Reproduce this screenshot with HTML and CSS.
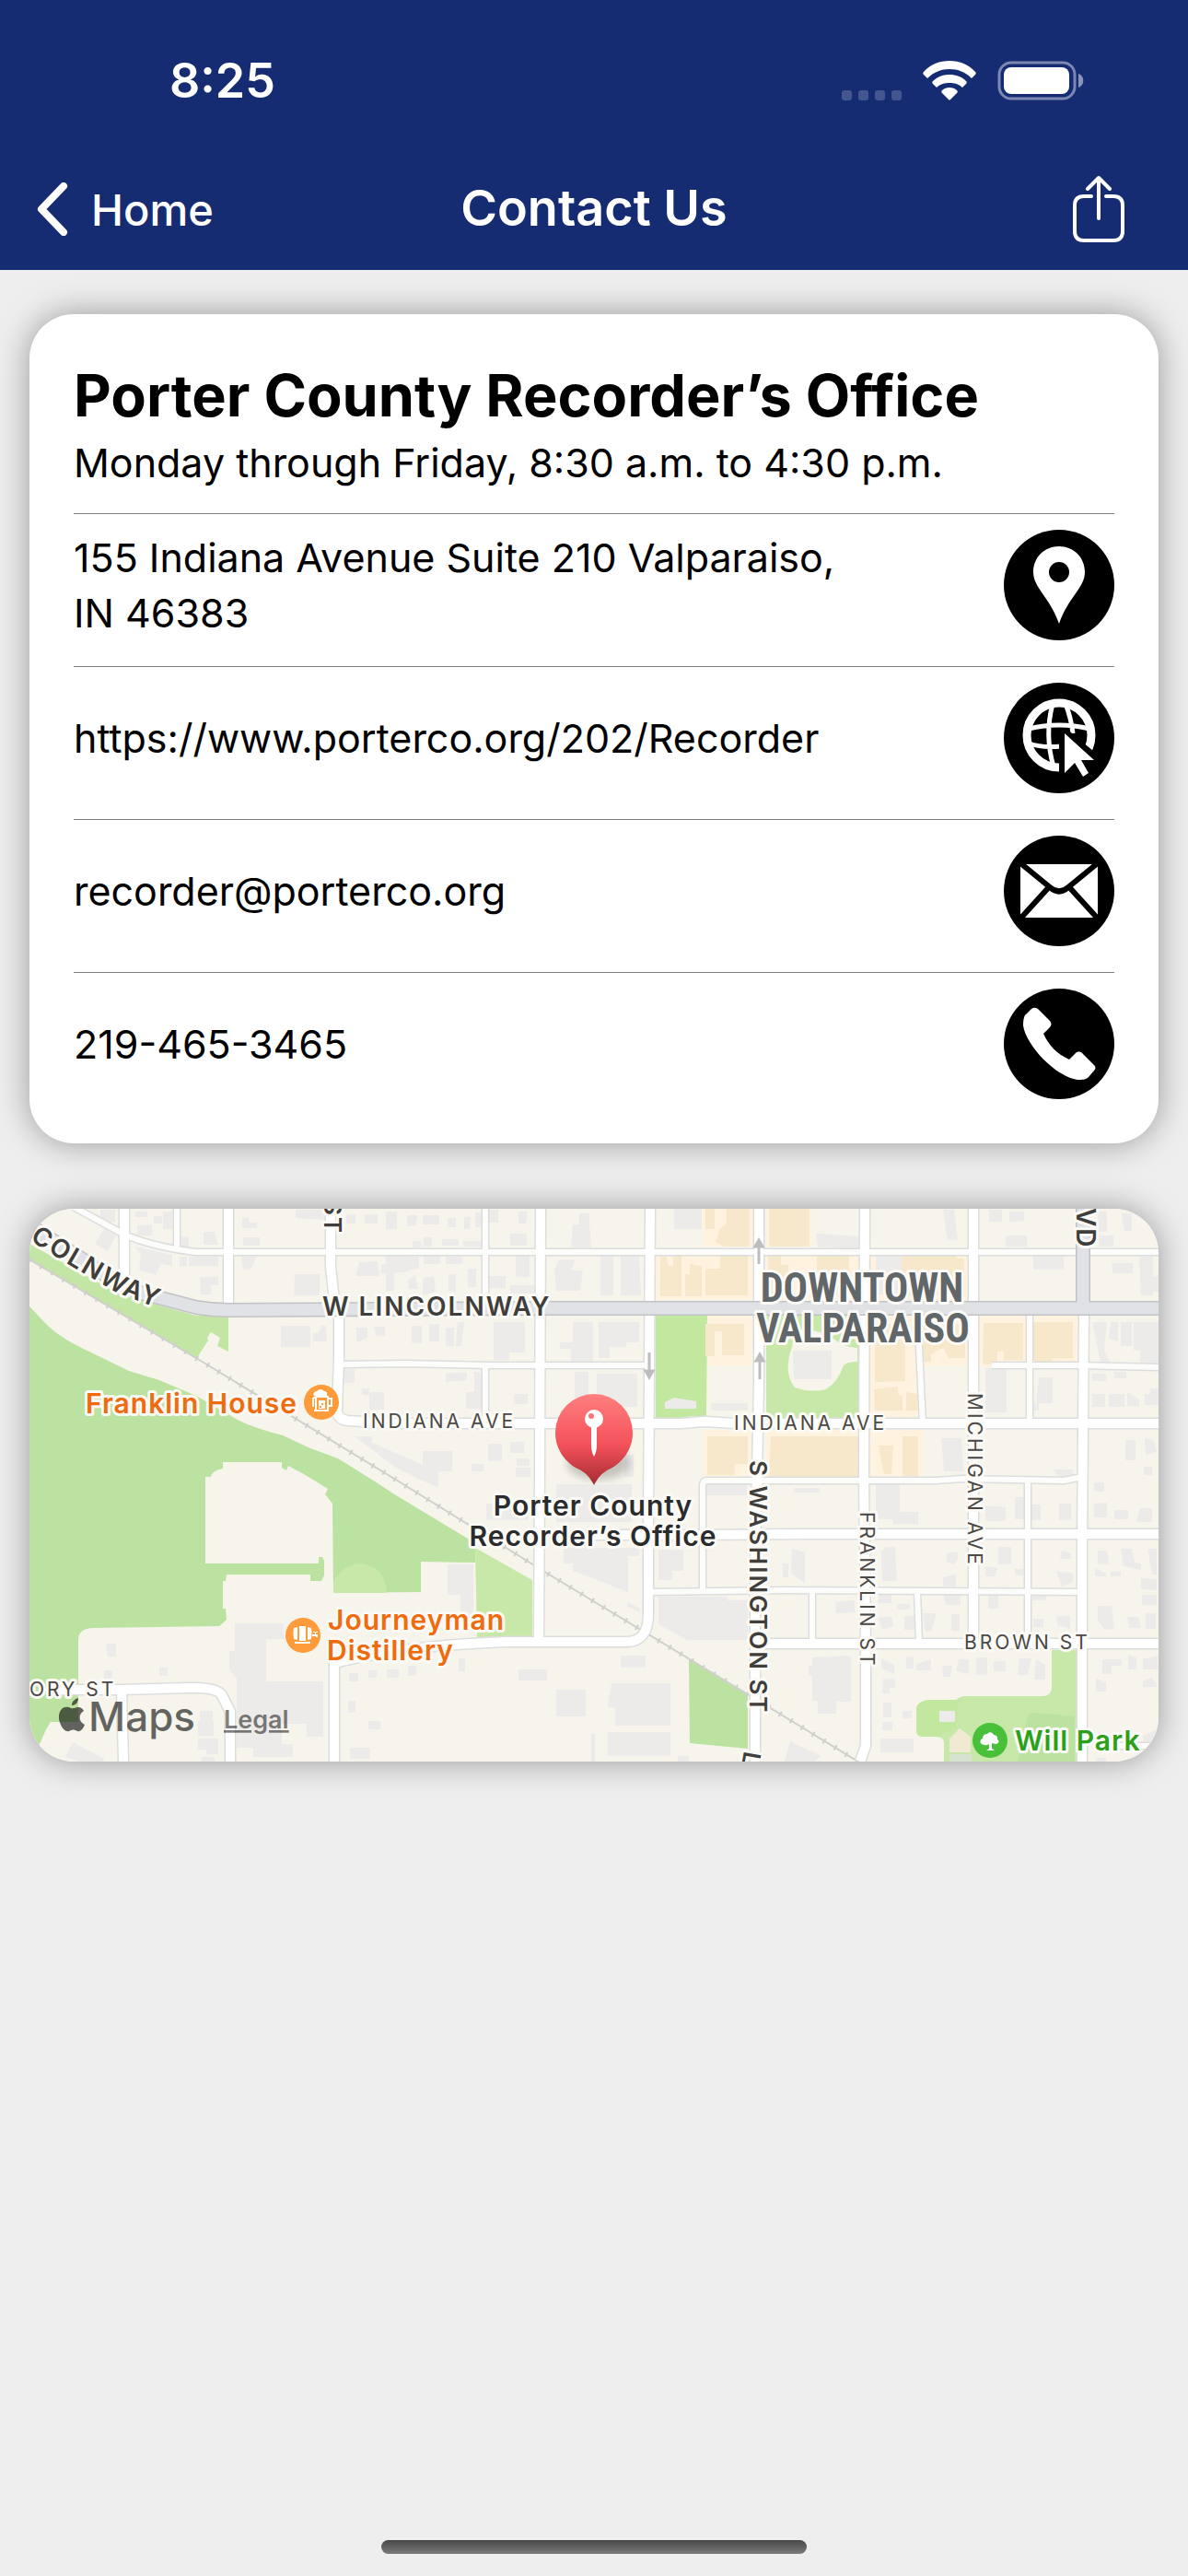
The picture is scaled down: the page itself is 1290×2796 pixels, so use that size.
FILE: index.html
```html
<!DOCTYPE html>
<html lang="en">
<head>
    <meta charset="UTF-8">
    <meta name="viewport" content="width=device-width, initial-scale=1.0">
    <title>Contact Us</title>
    <link rel="stylesheet" href="styles.css">
</head>
<body>
    <header class="header">
        <div class="status-bar">
            <span class="time">8:25</span>
            <div class="status-icons">
                <svg class="dots" width="65" height="11" viewBox="0 0 65 11">
                    <rect width="11" height="11" rx="3"/>
                    <rect x="18" width="11" height="11" rx="3"/>
                    <rect x="36" width="11" height="11" rx="3"/>
                    <rect x="54" width="11" height="11" rx="3"/>
                </svg>
                <svg class="wifi" width="58" height="43" viewBox="0 0 58 43">
                    <path d="M29 0C18 0 8 4 1 12c-1 1-1 2 0 3l4 4C12 12 20 9 29 9s17 3 24 10l4-4c1-1 1-2 0-3C50 4 40 0 29 0z"/>
                    <path d="M29 15c-7 0-13 2-18 7-1 1-1 2 0 3l4 4c4-4 9-5 14-5s10 1 14 5l4-4c1-1 1-2 0-3-5-5-11-7-18-7z"/>
                    <path d="M29 29c-3 0-6 1-8 3-1 1-1 2 0 3l7 7c1 1 1 1 2 0l7-7c1-1 1-2 0-3-2-2-5-3-8-3z"/>
                </svg>
                <svg class="battery" width="94" height="43" viewBox="0 0 94 43">
                    <rect x="2" y="2" width="82" height="39" rx="13" fill="none" stroke="#7c88b1" stroke-width="3"/>
                    <rect x="7" y="7" width="71" height="29" rx="8" fill="#fff"/>
                    <path d="M88 14c7 2 7 13 0 15z" fill="#8b95ba"/>
                </svg>
            </div>
        </div>
        <nav class="nav-bar">
            <a class="back" href="#">
                <svg width="34" height="58" viewBox="0 0 34 58"><path d="M29 4L5 29l24 25"/></svg>
                Home
            </a>
            <h1 class="title">Contact Us</h1>
            <button class="share" type="button" aria-label="Share">
                <svg width="58" height="74" viewBox="0 0 58 74"><path d="M21 23h-8q-10 0-10 10v28q0 10 10 10h32q10 0 10-10V33q0-10-10-10h-8M29 47V3M17 15L29 3l12 12"/></svg>
            </button>
        </nav>
    </header>

    <main class="content">
        <section class="card">
            <h2>Porter County Recorder’s Office</h2>
            <p class="hours">Monday through Friday, 8:30 a.m. to 4:30 p.m.</p>
            <a class="row" href="#map">
                <span>155 Indiana Avenue Suite 210 Valparaiso, IN 46383</span>
                <svg class="icon" viewBox="0 0 120 120">
                    <circle cx="60" cy="60" r="60"/>
                    <path fill="#fff" d="M60 18C44 18 32 30 32 46c0 17 18 27 28 56 10-29 28-39 28-56 0-16-12-28-28-28z"/>
                    <circle cx="60" cy="46" r="11"/>
                </svg>
            </a>
            <a class="row" href="https://www.porterco.org/202/Recorder">
                <span>https://www.porterco.org/202/Recorder</span>
                <svg class="icon" viewBox="0 0 120 120">
                    <circle cx="60" cy="60" r="60"/>
                    <g fill="none" stroke="#fff" stroke-width="5">
                        <circle cx="60" cy="57" r="35" stroke-width="9"/>
                        <path d="M53 23Q44 57 54 91M67 23Q73 38 75 55M27 50Q60 42 93 50M27 66Q42 71 62 69"/>
                    </g>
                    <path d="M60 50h8L97 74l10 8-17 22-30 8z"/>
                    <path fill="#fff" d="M66 55v43l11-11 9 15 6-4-8-14h14z"/>
                </svg>
            </a>
            <a class="row" href="mailto:recorder@porterco.org">
                <span>recorder@porterco.org</span>
                <svg class="icon" viewBox="0 0 120 120">
                    <circle cx="60" cy="60" r="60"/>
                    <path fill="#fff" d="M18 31h84v58H18z"/>
                    <path fill="none" stroke="#000" stroke-width="6" d="M17 29l33 27q10 9 20 0l33-27M48 57L18 90M72 57l30 33"/>
                </svg>
            </a>
            <a class="row" href="tel:219-465-3465">
                <span>219-465-3465</span>
                <svg class="icon" viewBox="0 0 120 120">
                    <circle cx="60" cy="60" r="60"/>
                    <path fill="#fff" d="M29 23c3-3 6-3 9 0l12 12c2 2 2 5 0 7l-7 7c6 13 15 22 28 28l7-7c2-2 5-2 7 0l13 13c2 2 2 4 0 6l-6 7c-3 3-7 3-12 3-23-3-56-37-59-59 0-6 1-11 3-12z"/>
                </svg>
            </a>
        </section>

        <section class="map" id="map">
            <svg viewBox="32 1312 1226 600">
                <defs>
                    <linearGradient id="pinRed" x1="0" y1="0" x2="0" y2="1">
                        <stop offset="0" stop-color="#ff7f7f"/>
                        <stop offset=".55" stop-color="#f4525a"/>
                        <stop offset="1" stop-color="#a52a32"/>
                    </linearGradient>
                    <filter id="soft"><feGaussianBlur stdDeviation="5"/></filter>
                    <path id="lincolnCurve" d="M32 1346L77 1374L123 1401Q150 1413 190 1426"/>

                    <!-- street network, drawn once for the edge and once for the surface -->
                    <g id="alleys">
                        <path d="M80 1310L135 1340Q165 1353 212 1359H850L1258 1359M192 1312V1356"/>
                        <path d="M370 1481L440 1480L530 1482H705M1077 1482H1170L1258 1484"/>
                        <path d="M527 1312V1418M527 1482V1545M763 1727V1612Q763 1607 768 1607H1015L1045 1605L1155 1607L1175 1603"/>
                        <path d="M705 1728L850 1726L1175 1728M882 1727V1784M996 1727L998 1784M996 1422L1002 1545"/>
                        <path d="M1118 1420V1545M1116 1607V1784M1200 1895H1258"/>
                    </g>
                    <g id="streets">
                        <path d="M135 1312V1405M248 1312V1418M359 1312V1375L363 1412L368 1430V1475L366 1530Q366 1541 378 1542L430 1545H740L765 1543L800 1545H1258"/>
                        <path d="M587 1312L586 1600L585 1782M706 1312L704 1660V1752Q704 1782 680 1782H550Q440 1786 363 1805V1912"/>
                        <path d="M824 1312V1500L820 1700V1912M939 1312L938 1600L940 1790V1895L934 1912"/>
                        <path d="M1057 1312V1784M1177 1425L1175 1680V1912"/>
                        <path d="M647 1666H760L870 1665H1258M822 1784H1258M60 1834H132L205 1832Q236 1831 241 1840L250 1858V1912M132 1834L134 1912"/>
                    </g>
                    <path id="highway" d="M32 1330L63 1350L87 1365Q125 1394 152 1403L213 1419Q230 1422 248 1422L600 1420H1258M1176 1312V1420"/>
                </defs>

                <path class="land" d="M32 1312h1226v600H32z"/>

                <!-- parks and lawns -->
                <path fill="#c3e6a4" d="M32 1350L130 1405L213 1428H248V1467L236 1461L239 1452L229 1446L225 1452L226 1455L213 1475L32 1366z"/>
                <path fill="#bce2a1" d="M32 1418L50 1437Q66 1453 97 1467L140 1488L173 1498L213 1515L253 1538Q266 1547 307 1558L337 1572L367 1583L407 1608L430 1623L516 1675V1696L457 1695V1728L362 1729L361 1632L353 1622L356 1616L330 1600L313 1591L311 1596L306 1593V1587H242V1594Q230 1596 229 1603H223V1697H346V1690H350L352 1694V1710L349 1716H337V1709H246L245 1716H242V1746H245L246 1758L238 1765L100 1767Q85 1768 85 1780V1869H55L50 1877L43 1893L32 1912z"/>
                <path fill="#c8e8aa" d="M516 1680L578 1715V1776L518 1777zM362 1716Q375 1697 392 1697Q418 1700 420 1729H362z"/>
                <path fill="#bce2a1" d="M748 1801L812 1840V1898L749 1892z"/>
                <path fill="#c1e89e" d="M712 1428H768L767 1537H750L740 1539H712z"/>
                <path fill="#c8e8aa" d="M832 1428H932V1540H832z"/>
                <path class="land" d="M860 1462Q850 1490 863 1506Q880 1512 897 1508Q910 1500 916 1482Q920 1478 931 1478V1463Q915 1462 905 1453Q890 1443 870 1443Q862 1446 860 1462z"/>
                <path fill="#c8e8aa" d="M1142 1791H1170V1912H1025V1892Q1025 1885 1016 1885H1002Q995 1885 995 1878V1855Q996 1846 1010 1845H1038Q1043 1841 1048 1841H1134Q1141 1840 1142 1832z"/>
                <path fill="#c1e89e" d="M1040 1845H1010Q996 1846 995 1855V1878Q995 1885 1002 1885H1016L1038 1876z"/>
                <path fill="#bce2a1" d="M1122 1859L1167 1863V1912H1105L1115 1866Q1117 1860 1122 1859z"/>

                <!-- shopping blocks -->
                <path fill="#fff2de" d="M762 1312h56v41h-56zM833 1312h48v41h-48zM712 1362h106v49H712zM833 1362h99v49h-99zM945 1362h105v49H945zM768 1428h49v55h-49zM945 1428h50v111h-50zM1002 1428h48v55h-48zM1063 1428h52v55h-52zM1121 1428h49v50h-49zM763 1552h52v50h-52zM832 1552h100v53h-100zM945 1552h57v51h-57z"/>
                <path fill="#f7e7cb" d="M766 1312h10v22h-10zM789 1312h25v41h-28l-9-5 4-13 8-7zM835 1312h44v41h-44zM717 1364h6l3 10h5v-13h9v46h-23zM744 1383h5v-11l13 2v33h-18zM766 1377h16v-16h30v45h-46zM834 1361h14v12h8v32h-22zM887 1361h35v45h-35zM979 1361h60v5h8v40h-68zM766 1437h42v34h-24v-26h-8v27h-10zM950 1437h33v62l-33 1zM949 1508l26-3v8l5 2v16h-30zM984 1511l12 2v18h-12zM1002 1437h46v37h-18l-6-11-13 7v8h-10zM1068 1436h43v40h-21v-9h-7v14h-16zM1121 1435h44v39l-22 1v5h-22zM768 1559h44v30h-14v12h-30zM837 1559h95v45h-97zM954 1569h16l-2 31h-8zM980 1559h17v43h-17z"/>

                <!-- buildings -->
                <g class="buildings">
                    <path d="M109 1313h16v13h-16zM147 1315h13v6h-13zM149 1330h16v11h-16zM167 1320h9v8h-9zM177 1315h10v19h-10zM221 1337h12l4 14h-16zM115 1330l13 7-11 21-14-8zM146 1353l41 9v12l-12-2-6 12-18-6 2-16zM195 1364h8v10h-8zM205 1364h32v10h-32zM197 1342h8v12h-8zM217 1386h20v9h-8v10h-11zM263 1322h7v5h9v6h-16zM264 1343h18v9h-18zM262 1364h17l-7 14h-8zM321 1313h32v11l-32-2zM376 1318h10v10h-10zM396 1318h14v10h-14zM419 1315h12v19h-12zM320 1383h27v23h-28zM390 1370l20-1 2 16h-26zM414 1372h5v10h-5zM419 1361h24v19l-15 2v19h-9zM305 1439h32v23h-32zM340 1447h6l3-8h5l1 17h-15zM387 1441h12v11l-12 5zM406 1440h12v10h-10zM371 1486h14v15h-14zM393 1507h8v7h-8zM401 1511h16v19h-16z"/>
                    <path d="M385 1559h19v7l55 24v-15h32v22h-15v18l-17-8-29-14z"/>
                    <path d="M442 1319h12l-3 12h-9zM459 1319h18v10h-18zM486 1322h9v10h-9zM504 1321h7l-1 13h-6zM516 1316h8v16h-8zM530 1313h11v14h-11zM563 1315h10l-2 13h-8zM554 1339h18v13h-18zM460 1343h9v10h-9zM480 1345h18v7h-18zM503 1347h22v6h-22zM448 1347h9v7h-9zM430 1364h25v13l-25 3zM460 1362h18v10h-18zM484 1364h18v8h-18zM508 1377h9v20h-9zM560 1362h15v24h-15zM530 1385h19v13h-19zM554 1395h26v9h-26zM443 1389l8-5 3 15h-10zM459 1387l12-2 2 17-14 4zM487 1383h8v19h-8z"/>
                    <path d="M629 1317h11v12l2 25h-22l2-25h7zM607 1367h18l-5 12h13l-3 22h-26l-2-23zM652 1363h14v43h-14zM674 1363l20-2 2 45h-22zM732 1312h30v22h-30zM447 1439h11v19h-11zM466 1437h11v19h-11zM484 1441h9v20h-9zM497 1435h7l-3 26h-6zM536 1435h34v33h-17v8h-17zM622 1435h22v43h-24v-14h-12v-7h14zM650 1435h44v22h-14v5h-18v12h-12zM484 1491l23-2v9l-23 2zM515 1489h8v40h-8zM506 1511h10v18h-10zM558 1513h15v11h-15zM624 1489h15v30h-15zM648 1491h44v36h-44zM530 1567h15v19h-15zM554 1565h15v12h-15zM561 1583h14v8h-14zM560 1593h16v10h-16zM512 1589h13v8h-13zM678 1579h10v24h-10zM604 1611h82v41h-82zM528 1632h46v18h-46zM722 1522l10-5 24 4v8h-34zM772 1523h40v8h-40z"/>
                    <path d="M612 1680h82v9h-12v39l-60-23v-8h-10zM715 1682h27v23h-12v10h-15zM767 1610h44v13h-44zM715 1733h75v4h22v43h-66l-31-17zM682 1739l13 7v4l-14-6zM486 1698h28v55h-14v-22h-14zM563 1812h31v12h-31zM604 1834h32v29h-32zM664 1827h64v46h-60v-20h-8zM660 1880h68v26h-68zM674 1797h27v13h-27zM498 1800h7v14h-7zM443 1808h9v11h-9zM642 1882h4v30h-4zM736 1906h12v6h-12z"/>
                    <path d="M115 1784h11v14h-9zM113 1813h9v9h-9zM173 1810h9v9h-9zM255 1762h53v17h-19v46h62v60h-18v-14h-27v22h12v14h-43v-10h-18v-75l-8-10v-20h6zM379 1816h10v9h-10zM400 1813h9v8h-9zM420 1812h13v9h-13zM378 1846h8v13h-8zM400 1868h13v9h-13zM380 1897h22v12h-22zM217 1857h14v11h-14zM215 1868h17v16h-17zM215 1887h22v17h-13v-5h-9zM219 1907h14v5h-14zM79 1891l35 18-3 3H85l-14-5z"/>
                    <path d="M1024 1313h12l4 33h-11zM1074 1313h14v13h-14zM1096 1315h16v10l-16 2zM1092 1341h23v12h-23zM886 1339l46 3v14l-44-3zM951 1361h28v44h-28zM1122 1362h33v16h-33zM1207 1371h23v11h-22zM1237 1364h15v42h-13zM1252 1386l6-2v18h-6zM1192 1315h10v22h-10zM1218 1317h11v19h-8zM1193 1341h16v12h-16zM861 1466h42v31h-41zM1186 1435h16l-3 30 6 13h-10zM1206 1435h8v21l-10-4zM1217 1435h12v26h-12zM1231 1435h27v45h-20v-14h-7zM1186 1491h15v8h-15zM1210 1489h13v7h-13zM1186 1513h14v14h-14zM1204 1513h17v14h-17zM1224 1511l13 8v7h-13zM1243 1513h6v-6h9v18h-15zM1070 1485h23v48h-23zM1128 1495h15v28h-18zM1118 1523h10v8h-10zM1022 1561h22l2 36h-21zM1145 1595h20v7h-17zM1222 1563h11v22h-11zM1243 1561l10 3 3 12-12 3zM1242 1592h9v9h-9z"/>
                    <path d="M951 1611h26v30h20v13h-27v-5h-19zM862 1615h28v5h-28zM860 1681l14 4v33l-15-10zM850 1697h6v15h-6zM957 1684l5-5h10l2 37h-16zM1028 1685h12v7l-4 6-8-3zM1024 1712l14-3v13h-14zM1070 1634l22 2v15h-22zM1102 1625h12v24h-12zM1120 1633h10v17h-10zM1150 1632h13v18h-13zM1084 1679h14v19h-14zM1070 1700l13 2-3 9h-10zM1101 1703h10v7h-8zM1153 1683l10 3v6h-12zM1147 1706l18 1v10l-12 5zM1188 1609h11v10h-11zM1188 1632l14-1v16h-14zM1210 1639h15v10h-15zM1238 1637h13v15h-17zM1192 1683h10l2 15h-12zM1217 1681h12l3 14 7 3v6l-19-4zM1246 1681h10v28h-5zM1189 1702l12 6v3h-12zM1206 1706l11-1v6h-11zM1239 1713l17 1v12l-17-1zM1240 1731h16v11h-16zM1192 1743h15l3 25-10 1-8-10zM1224 1755h12l3 12h-12zM1244 1751h11v17h-11z"/>
                    <path d="M907 1739l21-2v13l-20 1zM954 1731h14v9h-14zM974 1741h14v6h-14zM954 1756l14-2 2 11-12 4zM982 1754h12v15h-12zM1002 1751h15l-6 20h-6zM1033 1752h9v18h-9zM1024 1729h19v13h-16zM1073 1732h11v14h-11zM1121 1730h17l-3 7h-14zM1122 1757h11v9h-11zM1147 1755l15-2v15l-14-4zM882 1799l42-2v50h-16v13h-20v-14h-6v-27h-4v-11h4zM957 1800l14 7v10l-14-6zM984 1798h8v13h-8zM995 1806l16-5v12h-16zM1023 1808h11l-2 12h-8zM1041 1801h11v16l-14-3zM1060 1799h12v19h-12zM1079 1803h13v11h-13zM1107 1800h13l-4 18h-11zM1125 1801l10 6v16h-12zM959 1822h13v10h-6v6h-8zM959 1848h9v16h-9zM980 1857h10v8h-10zM958 1869h11v9h-11zM956 1887h36v15h-36zM1197 1801h21v7h-11v9h-10zM1225 1796l9 3v13h-9zM1241 1801l16-4v15h-16zM1190 1822l11 4v10h-11zM1241 1825l10-5 6 11h-16zM1190 1908h11v4h-11zM1241 1884l17-8v12l-16 4zM1020 1857h17v12h-17zM858 1890l34 16-8 6h-32z"/>
                </g>
                <path fill="#f0ead2" d="M1031 1887l11-11 12 9v17h-23z"/>
                <path fill="#d5e3cf" d="M1031 1904h24v8h-24z"/>

                <!-- railway -->
                <path class="rail" d="M32 1367L213 1474L433 1608L593 1707L812 1839L935 1914"/>
                <path class="rail-ties" d="M32 1367L213 1474L433 1608L593 1707L812 1839L935 1914"/>

                <use href="#alleys" class="alley-edge"/>
                <use href="#streets" class="street-edge"/>
                <use href="#alleys" class="alley"/>
                <use href="#streets" class="street"/>
                <use href="#highway" class="highway-edge"/>
                <use href="#highway" class="highway"/>

                <path class="arrow" d="M824 1372V1350M820 1353l4-7 4 7zM825 1497V1474M821 1477l4-7 4 7zM705 1468V1491M701 1488l4 7 4-7z"/>

                <!-- street names -->
                <text class="label road-major route"><textPath href="#lincolnCurve">COLNWAY</textPath></text>
                <text class="label road-major route" x="350" y="1428">W LINCOLNWAY</text>
                <text class="label road-major" transform="translate(352 1302) rotate(90)">ST</text>
                <text class="label road-major route" transform="translate(1169 1311) rotate(90)">VD</text>
                <text class="label road-major" transform="translate(814 1585) rotate(90)">S WASHINGTON ST</text>
                <text class="label road-major" transform="translate(808 1900) rotate(100)">L</text>
                <text class="label road-minor" x="394" y="1550">INDIANA AVE</text>
                <text class="label road-minor" x="797" y="1552">INDIANA AVE</text>
                <text class="label road-minor" x="1047" y="1790">BROWN ST</text>
                <text class="label road-minor" x="32" y="1841">ORY ST</text>
                <text class="label road-minor" transform="translate(1051 1512) rotate(90)">MICHIGAN AVE</text>
                <text class="label road-minor" transform="translate(934 1641) rotate(90)">FRANKLIN ST</text>
                <text class="label district" x="936" y="1413">DOWNTOWN</text>
                <text class="label district" x="937" y="1457">VALPARAISO</text>

                <!-- places -->
                <circle cx="349" cy="1522" r="19" fill="#ff9b3a"/>
                <path fill="none" stroke="#fff" stroke-width="2" d="M343 1516h13v15M343 1531V1516M341 1531h16M356 1518h4v8h-4M340 1527v-9l3-2"/>
                <path fill="#fff" d="M341 1515q-2-4 3-5 4-4 8 0 4 0 3 5zM346 1520h7v9h-7z"/>
                <path fill="#ff9b3a" d="M349 1523h2v2h-2zM347 1526h2v2h-2z"/>
                <text class="label place food" x="93" y="1534">Franklin House</text>

                <circle cx="329" cy="1775" r="19" fill="#ff9b3a"/>
                <path fill="#fff" d="M319 1767l4-1v14l-4-1q-1-6 0-12zM325 1765h7v16h-7zM334 1766l4 1q1 6 0 12l-4 1zM320 1782h17v2h-17zM339 1774h3v-2h-2v-1h5v1h-2v2h2v3h-2v-1h-4z"/>
                <text class="label place food" x="356" y="1769">Journeyman</text>
                <text class="label place food" x="355" y="1802">Distillery</text>

                <circle cx="1075" cy="1889" r="19" fill="#48c03a"/>
                <path fill="#fff" d="M1066 1893c-3-2-1-6 1-6 0-4 3-5 5-5 2-3 6-2 7 1 3 0 5 3 4 5 3 2 1 5-2 5l-4-1v6l3 2h-9l3-2v-5c-3 2-6 1-8 0z"/>
                <text class="label place park" x="1102" y="1900">Will Park</text>

                <ellipse cx="650" cy="1588" rx="34" ry="18" fill="#000" opacity=".2" filter="url(#soft)"/>
                <path fill="url(#pinRed)" d="M645 1513a42 42 0 0 1 42 42c0 19-12 33-24 39-9 4-14 10-18 18-4-8-9-14-18-18-12-6-24-20-24-39a42 42 0 0 1 42-42z"/>
                <circle cx="645" cy="1540" r="10" fill="#fff"/>
                <circle cx="642" cy="1537" r="3" fill="#ff7376"/>
                <path fill="#fff" d="M642 1548h6v20q0 8-3 13-3-5-3-13z"/>
                <text class="label place office" x="644" y="1645">Porter County</text>
                <text class="label place office" x="644" y="1678">Recorder’s Office</text>

                <path class="attribution" d="M85 1853c3 0 5 2 6 4-6 3-6 12 1 15-2 5-5 8-8 7-4-2-5-2-9 0-6 2-12-10-11-17 1-8 7-11 13-8 3 1 5-1 8-1zM78 1851c0-4 3-7 7-8 0 5-3 8-7 8z"/>
                <text class="attribution maps" x="96" y="1879">Maps</text>
                <a href="#"><text class="legal" x="243" y="1876">Legal</text></a>
            </svg>
        </section>
    </main>

    <div class="home-indicator"></div>
</body>
</html>
```
FILE: styles.css
```css
* {
    box-sizing: border-box;
}
body {
    margin: 0;
    min-height: 100vh;
    display: flex;
    flex-direction: column;
    background-color: #eeeeee;
    font-family: Inter, "Liberation Sans", sans-serif;
    color: #000;
}
a {
    color: inherit;
    text-decoration: none;
}
svg {
    display: block;
}

/* header */
.header {
    background-color: #162c72;
    color: #fff;
    padding-bottom: 14px;
}
.status-bar {
    height: 175px;
    padding: 0 113px 0 184px;
    display: flex;
    justify-content: space-between;
    align-items: center;
}
.time {
    font-size: 52px;
    font-weight: 600;
}
.status-icons {
    display: flex;
    align-items: flex-end;
    gap: 23px;
}
.dots {
    fill: #445690;
}
.wifi {
    fill: #fff;
}
.nav-bar {
    height: 104px;
    padding: 0 40px;
    display: grid;
    grid-template-columns: 1fr auto 1fr;
    align-items: center;
}
.back {
    display: flex;
    align-items: center;
    gap: 25px;
    font-size: 47px;
    font-weight: 500;
}
.back svg,
.share svg {
    fill: none;
    stroke: #fff;
    stroke-linecap: round;
    stroke-linejoin: round;
}
.back svg {
    stroke-width: 8;
}
.title {
    margin: 0;
    padding-bottom: 4px;
    font-size: 54px;
    font-weight: 600;
}
.share {
    justify-self: end;
    margin-right: 28px;
    padding: 0;
    border: none;
    background: none;
    cursor: pointer;
}
.share svg {
    stroke-width: 4;
}

/* cards */
.content {
    flex: 1;
    display: flex;
    flex-direction: column;
    gap: 71px;
    padding: 48px 32px;
}
.card,
.map {
    border-radius: 48px;
    box-shadow: 0 0 36px rgba(0, 0, 0, 0.36);
}
.card {
    padding: 48px;
    background-color: #fff;
}
.card h2 {
    margin: 0;
    font-size: 63px;
    line-height: 80px;
    font-weight: 700;
}
.hours {
    margin: 3px 0 25px;
    font-size: 43px;
    line-height: 60px;
}
.row {
    display: flex;
    justify-content: space-between;
    align-items: center;
    border-top: 1px solid #7e7e7e;
    padding: 17px 0 28px;
    font-size: 43px;
    line-height: 60px;
}
.row:last-child {
    padding-bottom: 0;
}
.row span {
    max-width: 76%;
}
.icon {
    width: 120px;
    height: 120px;
    flex: none;
}

/* map */
.map {
    overflow: hidden;
}
.map svg {
    width: 100%;
    height: auto;
}
.land {
    fill: #f6f4eb;
}
.buildings {
    fill: #ecebe9;
}
.rail {
    fill: none;
    stroke: #cfcfcc;
    stroke-width: 2;
}
.rail-ties {
    fill: none;
    stroke: #cfcfcc;
    stroke-width: 6;
    stroke-dasharray: 2 12;
}
.alley-edge,
.alley,
.street-edge,
.street,
.highway-edge,
.highway {
    fill: none;
    stroke-linejoin: round;
}
.alley-edge {
    stroke: #dcdedd;
    stroke-width: 9;
}
.alley {
    stroke: #fcfcfb;
    stroke-width: 6;
}
.street-edge {
    stroke: #dcdedd;
    stroke-width: 13;
}
.street {
    stroke: #fff;
    stroke-width: 10;
}
.highway-edge {
    stroke: #c0c2c6;
    stroke-width: 16;
}
.highway {
    stroke: #e1e2e6;
    stroke-width: 13;
}
.arrow {
    fill: #bdbdbd;
    stroke: #bdbdbd;
    stroke-width: 3;
}
.label {
    stroke: #fbfaf6;
    stroke-width: 6;
    stroke-linejoin: round;
    paint-order: stroke;
}
.road-major {
    font-size: 26px;
    font-weight: 600;
    letter-spacing: 2px;
    fill: #403e3b;
}
.route {
    font-size: 28px;
}
.road-minor {
    font-size: 21px;
    letter-spacing: 3px;
    fill: #4a4845;
}
.district {
    font-family: "Liberation Sans Narrow", "Roboto Condensed", "Open Sans Condensed", "DejaVu Sans Condensed", sans-serif;
    font-size: 44px;
    font-weight: 700;
    text-anchor: middle;
    fill: #616668;
}
.place {
    font-size: 30px;
    font-weight: 600;
    letter-spacing: 1px;
}
.food {
    fill: #f06a0e;
}
.park {
    fill: #2ba01a;
}
.office {
    fill: #2a2b2d;
    text-anchor: middle;
}
.attribution {
    fill: #000;
    fill-opacity: 0.6;
}
.maps {
    font-size: 44px;
    font-weight: 500;
}
.legal {
    font-size: 27px;
    font-weight: 600;
    fill: #000;
    fill-opacity: 0.5;
    text-decoration: underline;
}

.home-indicator {
    align-self: center;
    width: 462px;
    height: 15px;
    margin-bottom: 24px;
    border-radius: 8px;
    background: linear-gradient(#474747, #7c7c7c);
}
```
